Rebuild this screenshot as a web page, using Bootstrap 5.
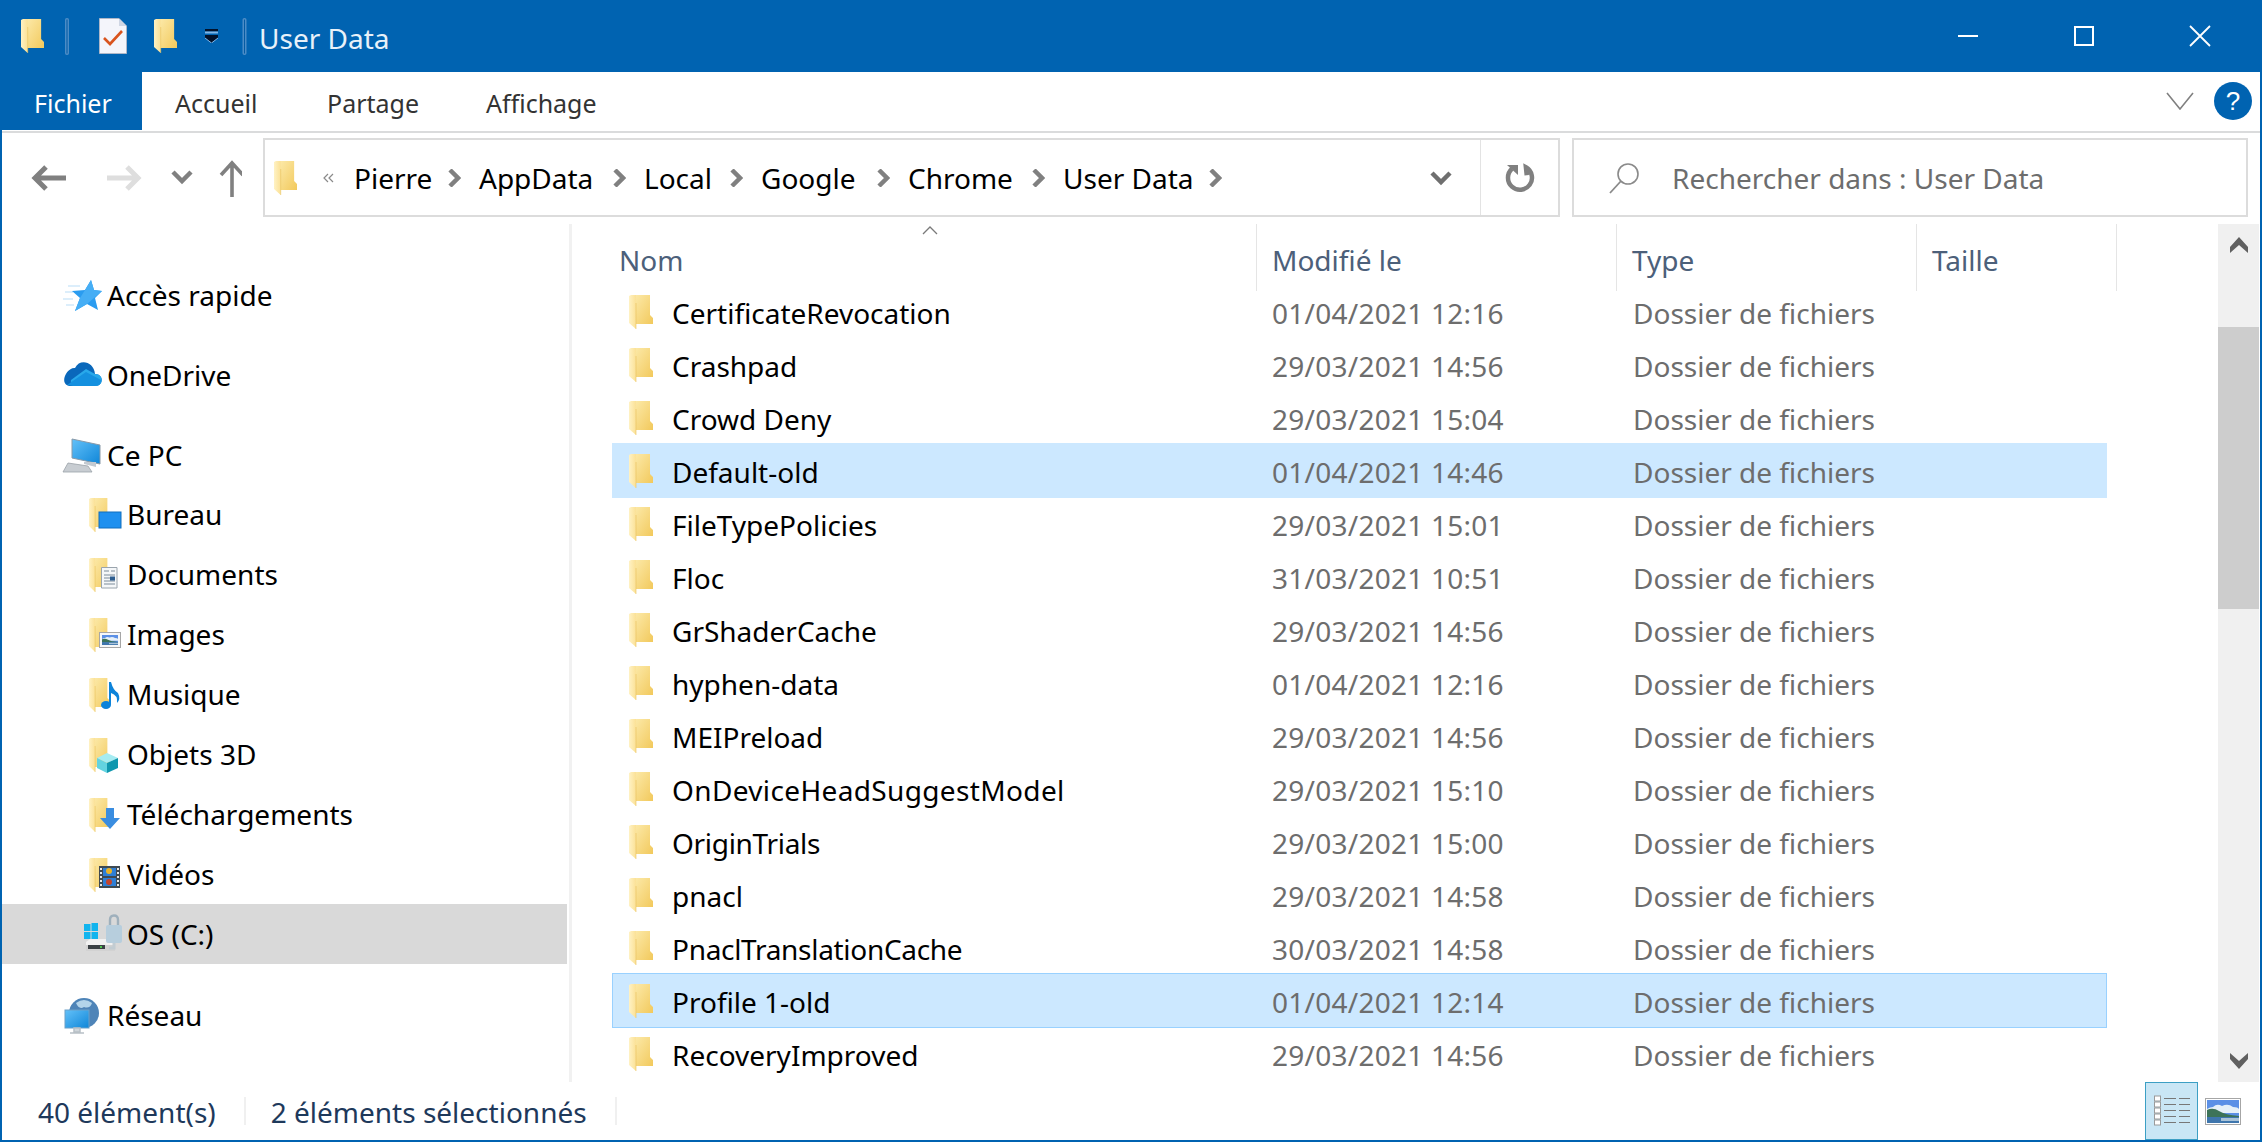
<!DOCTYPE html>
<html lang="fr">
<head>
<meta charset="utf-8">
<title>User Data</title>
<link rel="stylesheet" href="https://cdn.jsdelivr.net/npm/bootstrap@5.3.0/dist/css/bootstrap.min.css">
<style>
html,body{height:100%;overflow:hidden;background:#fff}
body{font-family:"Noto Sans","Open Sans",sans-serif;font-size:28px;color:#000;line-height:1.2}
.defs{display:block;width:0;height:0}
.win{width:2262px;height:1142px;border:solid #0063b1;border-width:0 2px 2px 2px}
.tbar{height:72px;background:#0063b1;color:#fff;margin:0 -2px;flex:none}
.tbar svg{display:block;flex:none}
.ti1{margin-left:21px}.ti2{margin-left:21px}.ti3{margin-left:30px}.ti4{margin-left:27px}.ti5{margin-left:28px}.ti6{margin-left:24px}
.ttl{margin-left:12px;color:#e8f1f9;font-size:28px;padding-top:5px}
.wc{width:116px;flex:none}
.wcs{margin-right:4px}
.rib{height:61px;border-bottom:2px solid #dadbdc;flex:none}
.tabf{width:140px;height:58px;background:#0063b1;color:#fff;font-size:25px;padding:4px 0 0 32px;flex:none}
.tabn{height:58px;font-size:25px;color:#333;flex:none;padding-top:4px}
.tb1{width:185px;padding-left:33px}
.tb2{width:159px}
.tb3{width:200px}
.ribr{padding-bottom:2px}
.ribc{margin-right:20px;display:block}
.ribh{margin-right:8px;display:block}
.addr{height:91px;padding:5px 0 7px;flex:none}
.navi{width:261px;flex:none}
.abox{width:1297px;height:79px;border:2px solid #dcdcdc;flex:none;padding-left:9px}
.lq{margin:0 19px 0 26px;display:block;flex:none}
.crumbs{font-size:28px}
.crumb{flex:none;padding-top:3px}
.crumb svg{margin-top:-3px}
.c1{width:125px}.c2{width:165px}.c3{width:117px}.c4{width:147px}.c5{width:155px}.c6{width:177px}
.chev{margin-right:18px;flex:none}
.adrop{margin-left:auto;width:78px}
.arf{width:78px;height:75px;border-left:1px solid #e3e3e3;flex:none}
.sbox{width:676px;height:79px;border:2px solid #dcdcdc;margin-left:12px;flex:none;color:#6d6d6d;font-size:28px}
.slbl{margin-left:32px;padding-top:3px}
.smag{margin-left:34px;flex:none}
.mainp{height:858px;flex:none}
.side{width:570px;border-right:3px solid #f1f1f1;padding-top:44px;flex:none}
.nit{height:56px;padding-left:60px;font-size:28px}
.nit svg,.sit svg{flex:none;display:block}
.nit span{margin-left:5px}
.gtop{margin-bottom:24px}
.sit{height:60px;padding-left:82px;font-size:28px}
.sit span{margin-left:3px;padding-top:2px}
.sit.act{background:#d9d9d9;margin-right:2px}
.lst{width:1646px;padding-left:40px;flex:none}
.hdr{height:67px;margin-left:-40px;padding-left:40px;color:#4c607a;font-size:28px;margin-bottom:-6px;position:relative;flex:none}
.hc{height:67px;padding-top:6px;flex:none;border-right:1px solid #e5e5e5}
.h1c{width:645px;padding-left:7px}
.h2c{width:360px;padding-left:15px}
.h3c{width:300px;padding-left:15px}
.h4c{width:200px;padding-left:15px}
.sorta{position:absolute;left:350px;top:2px}
.frow{height:53px;width:1495px;font-size:28px;flex:none}
.frow svg{margin-left:17px;flex:none;display:block}
.nm{width:619px;padding:4px 0 0 19px;flex:none}
.dt{width:361px;color:#6d6d6d;flex:none;padding-top:4px;letter-spacing:.25px}
.ty{color:#6d6d6d;flex:none;padding-top:4px}
.sel{background:#cce8ff;height:55px;margin:-1px 0}
.sel2{box-shadow:inset 0 0 0 1px #99d1ff}
.lsw{letter-spacing:.36px}
.lsn{letter-spacing:-.3px}
.sbar{width:41px;background:#f0f0f0;flex:none}
.sb-a{height:41px;flex:none}
.sb-t{height:282px;background:#cdcdcd;margin-top:62px;flex:none}
.sb-e{margin-top:auto;height:42px;flex:none}
.stat{height:58px;flex:none;color:#1e395b;font-size:28px}
.st1{margin-left:36px;padding-top:3px}
.ssep{width:2px;height:28px;background:#f0f0f0;flex:none}
.ss1{margin-left:28px}
.st2{margin-left:25px;padding-top:3px}
.ss2{margin-left:28px}
.vbtn{width:53px;height:58px;background:#c9e6f5;border:1px solid #3c9fc4;margin-left:auto;flex:none}
.vimg{margin:0 19px 0 7px;flex:none;display:block}
</style>
</head>
<body>
<svg class="defs" xmlns="http://www.w3.org/2000/svg" aria-hidden="true">
<defs>
<linearGradient id="fg" x1="0" y1="0" x2="1" y2="1"><stop offset="0" stop-color="#fce9a8"/><stop offset="1" stop-color="#f2c95c"/></linearGradient>
<linearGradient id="fl" x1="0" y1="0" x2="1" y2="0"><stop offset="0" stop-color="#fff2c4"/><stop offset="1" stop-color="#fbe196"/></linearGradient>
<linearGradient id="mon" x1="0" y1="0" x2="1" y2="1"><stop offset="0" stop-color="#63c1f9"/><stop offset="1" stop-color="#0f86d8"/></linearGradient>
<symbol id="fld" viewBox="0 0 24 34" preserveAspectRatio="none">
<path d="M6 0H21V20L24 23V29H6Z" fill="url(#fg)"/>
<path d="M0 1L2 0H7V34L0 28Z" fill="url(#fl)"/>
<path d="M7 8V34" stroke="#e7c05a" stroke-width=".6"/>
</symbol>
<symbol id="lnd" viewBox="0 0 32 23" preserveAspectRatio="none">
<rect width="32" height="23" fill="#5c90e6"/>
<path d="M6 7Q10 3 15 6Q21 3 26 7Q31 7 32 9V13H0V9Q3 7 6 7Z" fill="#e6f0f8"/>
<path d="M0 10Q6 7 12 11Q18 15 32 16V17H0Z" fill="#3d7358"/>
<rect y="17" width="32" height="6" fill="#3f76ad"/>
<rect x="14" y="18" width="18" height="3" fill="#a9c3d8"/>
</symbol>
</defs>
</svg>
<div class="win d-flex flex-column">
<div class="tbar d-flex align-items-center">
<svg class="ti1" width="23" height="34"><use href="#fld" width="23" height="34"/></svg>
<svg class="ti2" width="4" height="37" viewBox="0 0 4 37"><rect x=".75" y=".75" width="2.5" height="35.5" rx="1" fill="#035ba4" stroke="#4b8cc6" stroke-width="1.5"/></svg>
<svg class="ti3" width="28" height="36" viewBox="0 0 28 36"><path d="M.5.5H20L27.5 8V35.5H.5Z" fill="#f4f5fb" stroke="#aeb7c8"/><path d="M20 .5V8H27.5Z" fill="#cfd6e4"/><path d="M5 20L11 26L23 13" fill="none" stroke="#d9541e" stroke-width="2.6"/></svg>
<svg class="ti4" width="23" height="34"><use href="#fld" width="23" height="34"/></svg>
<svg class="ti5" width="13" height="14" viewBox="0 0 13 14"><rect width="13" height="2.5" fill="#02122b"/><rect y="2.5" width="13" height="2" fill="#7fb6e8"/><path d="M0 6H13V9L6.5 14L0 9Z" fill="#02122b"/><path d="M0 9L6.5 14L13 9" fill="none" stroke="#7fb6e8"/></svg>
<svg class="ti6" width="5" height="37" viewBox="0 0 4 37"><rect x=".75" y=".75" width="2.5" height="35.5" rx="1" fill="#035ba4" stroke="#4b8cc6" stroke-width="1.5"/></svg>
<div class="ttl">User Data</div>
<div class="d-flex align-items-center ms-auto wcs">
<div class="wc d-flex justify-content-center"><svg width="20" height="20" viewBox="0 0 20 20"><path d="M0 10H20" stroke="#fff" stroke-width="2"/></svg></div>
<div class="wc d-flex justify-content-center"><svg width="20" height="20" viewBox="0 0 20 20"><rect x="1" y="1" width="18" height="18" fill="none" stroke="#fff" stroke-width="2"/></svg></div>
<div class="wc d-flex justify-content-center"><svg width="22" height="22" viewBox="0 0 22 22"><path d="M1 1L21 21M21 1L1 21" stroke="#fff" stroke-width="1.8"/></svg></div>
</div>
</div>
<div class="rib d-flex">
<div class="tabf d-flex align-items-center">Fichier</div>
<div class="tabn d-flex align-items-center tb1">Accueil</div>
<div class="tabn d-flex align-items-center tb2">Partage</div>
<div class="tabn d-flex align-items-center tb3">Affichage</div>
<div class="ribr d-flex align-items-center ms-auto">
<svg width="28" height="18" viewBox="0 0 28 18" class="ribc"><path d="M1 1L14 17L27 1" fill="none" stroke="#808080" stroke-width="1.6"/></svg>
<svg width="38" height="38" viewBox="0 0 38 38" class="ribh"><circle cx="19" cy="19" r="19" fill="#0063b1"/><text x="19" y="28" fill="#fff" text-anchor="middle" font-size="26" font-family="Liberation Sans">?</text></svg>
</div>
</div>
<div class="addr d-flex">
<div class="navi d-flex align-items-center">
<svg width="240" height="40" viewBox="0 0 240 40" class="d-block">
<path d="M32 20H64M44 9L33 20L44 31" fill="none" stroke="#808080" stroke-width="5"/>
<path d="M105 20H137M125 9L136 20L125 31" fill="none" stroke="#dedede" stroke-width="5"/>
<path d="M171 14L180 23L189 14" fill="none" stroke="#808080" stroke-width="4.5"/>
<path d="M231 39V6M220 17L231 5L242 17" fill="none" stroke="#808080" stroke-width="3.6" transform="translate(-1 0)"/>
</svg>
</div>
<div class="abox d-flex align-items-center">
<svg width="23" height="34" class="d-block flex-none"><use href="#fld" width="23" height="34"/></svg>
<svg width="12" height="12" viewBox="0 0 12 12" class="lq"><path d="M5 2L1 6L5 10M10 2L6 6L10 10" fill="none" stroke="#8a8a8a" stroke-width="1.2"/></svg>
<div class="d-flex align-items-center crumbs">
<div class="crumb c1 d-flex justify-content-between align-items-center">Pierre<svg class="chev" width="13" height="18" viewBox="0 0 13 18"><path d="M2 1L10 9L2 17" fill="none" stroke="#808080" stroke-width="4.5"/></svg></div>
<div class="crumb c2 d-flex justify-content-between align-items-center">AppData<svg class="chev" width="13" height="18" viewBox="0 0 13 18"><path d="M2 1L10 9L2 17" fill="none" stroke="#808080" stroke-width="4.5"/></svg></div>
<div class="crumb c3 d-flex justify-content-between align-items-center">Local<svg class="chev" width="13" height="18" viewBox="0 0 13 18"><path d="M2 1L10 9L2 17" fill="none" stroke="#808080" stroke-width="4.5"/></svg></div>
<div class="crumb c4 d-flex justify-content-between align-items-center">Google<svg class="chev" width="13" height="18" viewBox="0 0 13 18"><path d="M2 1L10 9L2 17" fill="none" stroke="#808080" stroke-width="4.5"/></svg></div>
<div class="crumb c5 d-flex justify-content-between align-items-center">Chrome<svg class="chev" width="13" height="18" viewBox="0 0 13 18"><path d="M2 1L10 9L2 17" fill="none" stroke="#808080" stroke-width="4.5"/></svg></div>
<div class="crumb c6 d-flex justify-content-between align-items-center">User Data<svg class="chev" width="13" height="18" viewBox="0 0 13 18"><path d="M2 1L10 9L2 17" fill="none" stroke="#808080" stroke-width="4.5"/></svg></div>
</div>
<div class="adrop d-flex justify-content-center"><svg width="22" height="16" viewBox="0 0 22 16"><path d="M2 3L11 12L20 3" fill="none" stroke="#6f6f6f" stroke-width="4.5"/></svg></div>
<div class="arf d-flex align-items-center justify-content-center"><svg width="30" height="30" viewBox="0 0 30 30"><path d="M8 5A12 12 0 1 0 22 5V13" fill="none" stroke="#808080" stroke-width="4.5" transform="rotate(-6 15 15)"/><path d="M2 3H13V13" fill="#808080" transform="translate(0 -1)"/></svg></div>
</div>
<div class="sbox d-flex align-items-center">
<svg class="smag" width="32" height="32" viewBox="0 0 32 32"><circle cx="20" cy="12" r="10" fill="none" stroke="#8a8a8a" stroke-width="1.6"/><path d="M13 19L2 31" stroke="#8a8a8a" stroke-width="1.8"/></svg>
<div class="slbl">Rechercher dans : User Data</div>
</div>
</div>
<div class="mainp d-flex">
<div class="side">
<div class="nit gtop d-flex align-items-center">
<svg width="40" height="40" viewBox="0 0 40 40"><path d="M6 10H18M3 16H11M1 23H11M4 29H12" stroke="#b9def8" stroke-width="1.2"/><path d="M29 4L32 14L40 15L33 22L36 34L25 28L13 35L18 22L10 15L23 14Z" fill="#2a9cf0"/><path d="M29 4L32 14L40 15L25 28L13 35L18 22L23 14Z" fill="#46aef5"/></svg>
<span>Accès rapide</span></div>
<div class="nit gtop d-flex align-items-center">
<svg width="40" height="40" viewBox="0 0 40 40"><g transform="translate(0 -2)"><path d="M9 32H33C42 32 42 20 33 20C32 8 18 4 13 14C4 13 -4 32 9 32Z" fill="#0a68bb"/><path d="M13 32H33C42 32 42 20 33 20L24 15L9 26Q8 32 13 32Z" fill="#28a8ea"/><path d="M5 31Q10 32 13 32H33C37 32 39 29 39 26L24 18Z" fill="#1490df"/></g></svg>
<span>OneDrive</span></div>
<div class="nit d-flex align-items-center">
<svg width="40" height="40" viewBox="0 0 40 40"><path d="M10 3L38 9V28L10 22Z" fill="url(#mon)" stroke="#8a9aa8" stroke-width="1"/><path d="M22 26H34V31L22 28Z" fill="#c3cad1"/><path d="M6 27L26 30L30 36L1 36Z" fill="#c8cdd2" stroke="#9aa2a8" stroke-width=".8"/></svg>
<span>Ce PC</span></div>
<div class="sit d-flex align-items-center">
<svg width="40" height="40" viewBox="0 0 40 40"><use href="#fld" x="5" y="4" width="21" height="34"/><rect x="15" y="18" width="22" height="16" fill="#1e90ef" stroke="#106ebe" stroke-width="1"/></svg>
<span>Bureau</span></div>
<div class="sit d-flex align-items-center">
<svg width="40" height="40" viewBox="0 0 40 40"><use href="#fld" x="5" y="4" width="21" height="34"/><path d="M17.5 13.5H33V34H17.5Z" fill="#f5f7f9" stroke="#9aa4ad"/><path d="M20 17H25M27 17H31M20 21H31M20 24H26M20 27H31M20 30H31" stroke="#7d8c9a" stroke-width="1.2"/><rect x="26" y="22.5" width="5" height="4" fill="#2d5d8f"/></svg>
<span>Documents</span></div>
<div class="sit d-flex align-items-center">
<svg width="40" height="40" viewBox="0 0 40 40"><use href="#fld" x="5" y="4" width="21" height="34"/><rect x="15.5" y="18.5" width="21" height="15" fill="#f7f7f7" stroke="#a6a6a6"/><use href="#lnd" x="18" y="21" width="16" height="10"/></svg>
<span>Images</span></div>
<div class="sit d-flex align-items-center">
<svg width="40" height="40" viewBox="0 0 40 40"><use href="#fld" x="5" y="4" width="21" height="34"/><ellipse cx="22" cy="31" rx="5" ry="4" fill="#0c83da"/><path d="M25 30V8H27Q29 16 34 19Q37 25 33 29Q34 21 27 19V31Z" fill="#0c83da"/></svg>
<span>Musique</span></div>
<div class="sit d-flex align-items-center">
<svg width="40" height="40" viewBox="0 0 40 40"><use href="#fld" x="5" y="4" width="21" height="34"/><path d="M13 24L23 19L34 24L23 29Z" fill="#a6ecf2"/><path d="M13 24L23 29V39L13 34Z" fill="#62d3e0"/><path d="M34 24L23 29V39L34 34Z" fill="#0f97ae"/></svg>
<span>Objets 3D</span></div>
<div class="sit d-flex align-items-center">
<svg width="40" height="40" viewBox="0 0 40 40"><use href="#fld" x="5" y="4" width="21" height="34"/><path d="M22 14H30V24H36L26 35L16 24H22Z" fill="#3a8de0"/></svg>
<span>Téléchargements</span></div>
<div class="sit d-flex align-items-center">
<svg width="40" height="40" viewBox="0 0 40 40"><use href="#fld" x="5" y="4" width="21" height="34"/><rect x="15" y="12" width="21" height="22" fill="#3f4a52"/><rect x="19" y="14" width="13" height="8" fill="#2e7fd6"/><rect x="19" y="24" width="13" height="8" fill="#2e7fd6"/><circle cx="25" cy="17" r="3" fill="#e8b32a"/><circle cx="25" cy="28" r="3" fill="#c5442c"/><path d="M17 14V33M34 14V33" stroke="#e8e8e8" stroke-width="2" stroke-dasharray="2 2"/></svg>
<span>Vidéos</span></div>
<div class="sit act d-flex align-items-center">
<svg width="40" height="40" viewBox="0 0 40 40"><path d="M0 10H6.500V17H0ZM7.500 9H14V17H7.500ZM0 18H6.500V25H0ZM7.500 18H14V26H7.500Z" fill="#11b4ee"/><path d="M2 28L6 25H27L31 29V37H2Z" fill="#f1f1f1"/><path d="M2 31H31V37H2Z" fill="#d2d2d2"/><rect x="4" y="31" width="17" height="4" fill="#3a4044"/><rect x="16" y="32" width="2" height="2" fill="#4fc44f"/><path d="M26 13V6Q26 1.500 30 1.500Q34 1.500 34 6V13" fill="none" stroke="#9fb0bc" stroke-width="2.4"/><rect x="22" y="11" width="16" height="18" rx="2" fill="#b7cedd"/><path d="M30 29V34H25" fill="none" stroke="#c2ccd2" stroke-width="3"/></svg>
<span>OS (C:)</span></div>
<div class="nit d-flex align-items-center mt-4">
<svg width="40" height="40" viewBox="0 0 40 40"><circle cx="22" cy="17" r="15" fill="#4e84b8"/><path d="M14 7Q22 1 30 7Q28 13 22 11Q17 14 14 7Z" fill="#b3d4ea"/><rect x="3" y="14" width="24" height="18" fill="url(#mon)" stroke="#6aa0c8" stroke-width="1"/><path d="M12 32H18V36H12ZM8 37H22" stroke="#b8c0c6" stroke-width="1.5" fill="#cfd5da"/></svg>
<span>Réseau</span></div>
</div>
<div class="lst d-flex flex-column">
<div class="hdr d-flex">
<svg class="sorta" width="16" height="9" viewBox="0 0 16 9"><path d="M1 8L8 1L15 8" fill="none" stroke="#7a7a7a" stroke-width="1.3"/></svg>
<div class="hc h1c d-flex align-items-center">Nom</div>
<div class="hc h2c d-flex align-items-center">Modifié le</div>
<div class="hc h3c d-flex align-items-center">Type</div>
<div class="hc h4c d-flex align-items-center">Taille</div>
</div>
<div class="frow d-flex align-items-center"><svg width="24" height="34"><use href="#fld" width="24" height="34"/></svg><div class="nm">CertificateRevocation</div><div class="dt">01/04/2021 12:16</div><div class="ty">Dossier de fichiers</div></div>
<div class="frow d-flex align-items-center"><svg width="24" height="34"><use href="#fld" width="24" height="34"/></svg><div class="nm">Crashpad</div><div class="dt">29/03/2021 14:56</div><div class="ty">Dossier de fichiers</div></div>
<div class="frow d-flex align-items-center"><svg width="24" height="34"><use href="#fld" width="24" height="34"/></svg><div class="nm">Crowd Deny</div><div class="dt">29/03/2021 15:04</div><div class="ty">Dossier de fichiers</div></div>
<div class="frow sel d-flex align-items-center"><svg width="24" height="34"><use href="#fld" width="24" height="34"/></svg><div class="nm">Default-old</div><div class="dt">01/04/2021 14:46</div><div class="ty">Dossier de fichiers</div></div>
<div class="frow d-flex align-items-center"><svg width="24" height="34"><use href="#fld" width="24" height="34"/></svg><div class="nm">FileTypePolicies</div><div class="dt">29/03/2021 15:01</div><div class="ty">Dossier de fichiers</div></div>
<div class="frow d-flex align-items-center"><svg width="24" height="34"><use href="#fld" width="24" height="34"/></svg><div class="nm">Floc</div><div class="dt">31/03/2021 10:51</div><div class="ty">Dossier de fichiers</div></div>
<div class="frow d-flex align-items-center"><svg width="24" height="34"><use href="#fld" width="24" height="34"/></svg><div class="nm">GrShaderCache</div><div class="dt">29/03/2021 14:56</div><div class="ty">Dossier de fichiers</div></div>
<div class="frow d-flex align-items-center"><svg width="24" height="34"><use href="#fld" width="24" height="34"/></svg><div class="nm">hyphen-data</div><div class="dt">01/04/2021 12:16</div><div class="ty">Dossier de fichiers</div></div>
<div class="frow d-flex align-items-center"><svg width="24" height="34"><use href="#fld" width="24" height="34"/></svg><div class="nm">MEIPreload</div><div class="dt">29/03/2021 14:56</div><div class="ty">Dossier de fichiers</div></div>
<div class="frow d-flex align-items-center"><svg width="24" height="34"><use href="#fld" width="24" height="34"/></svg><div class="nm lsw">OnDeviceHeadSuggestModel</div><div class="dt">29/03/2021 15:10</div><div class="ty">Dossier de fichiers</div></div>
<div class="frow d-flex align-items-center"><svg width="24" height="34"><use href="#fld" width="24" height="34"/></svg><div class="nm lsn">OriginTrials</div><div class="dt">29/03/2021 15:00</div><div class="ty">Dossier de fichiers</div></div>
<div class="frow d-flex align-items-center"><svg width="24" height="34"><use href="#fld" width="24" height="34"/></svg><div class="nm">pnacl</div><div class="dt">29/03/2021 14:58</div><div class="ty">Dossier de fichiers</div></div>
<div class="frow d-flex align-items-center"><svg width="24" height="34"><use href="#fld" width="24" height="34"/></svg><div class="nm lsn">PnaclTranslationCache</div><div class="dt">30/03/2021 14:58</div><div class="ty">Dossier de fichiers</div></div>
<div class="frow sel sel2 d-flex align-items-center"><svg width="24" height="34"><use href="#fld" width="24" height="34"/></svg><div class="nm">Profile 1-old</div><div class="dt">01/04/2021 12:14</div><div class="ty">Dossier de fichiers</div></div>
<div class="frow d-flex align-items-center"><svg width="24" height="34"><use href="#fld" width="24" height="34"/></svg><div class="nm">RecoveryImproved</div><div class="dt">29/03/2021 14:56</div><div class="ty">Dossier de fichiers</div></div>
</div>
<div class="sbar d-flex flex-column">
<div class="sb-a d-flex align-items-center justify-content-center"><svg width="18" height="16" viewBox="0 0 18 16"><path d="M0 10L9 0L18 10V16L9 8L0 16Z" fill="#606060"/></svg></div>
<div class="sb-t"></div>
<div class="sb-e d-flex align-items-center justify-content-center"><svg width="18" height="16" viewBox="0 0 18 16"><path d="M0 0L9 8L18 0V6L9 16L0 6Z" fill="#606060"/></svg></div>
</div>
</div>
<div class="stat d-flex align-items-center">
<div class="st1">40 élément(s)</div><div class="ssep ss1"></div>
<div class="st2">2 éléments sélectionnés</div><div class="ssep ss2"></div>
<div class="vbtn d-flex align-items-center justify-content-center"><svg width="36" height="32" viewBox="0 0 36 32"><g fill="#fff" stroke="#9a9a9a"><rect x=".5" y="1" width="6" height="5"/><rect x=".5" y="7" width="6" height="5"/><rect x=".5" y="13" width="6" height="5"/><rect x=".5" y="19" width="6" height="5"/><rect x=".5" y="25" width="6" height="5"/></g><path d="M10 3.500H22M25 3.500H36M10 9.500H22M25 9.500H36M10 15.500H22M25 15.500H36M10 21.500H22M25 21.500H36M10 27.500H22M25 27.500H36" stroke="#777" stroke-width="1"/></svg></div>
<svg class="vimg" width="36" height="27" viewBox="0 0 36 27"><rect x=".5" y=".5" width="35" height="26" fill="#fff" stroke="#a6a6a6"/><use href="#lnd" x="2" y="2" width="32" height="23"/></svg>
</div>
</div>
</body>
</html>
